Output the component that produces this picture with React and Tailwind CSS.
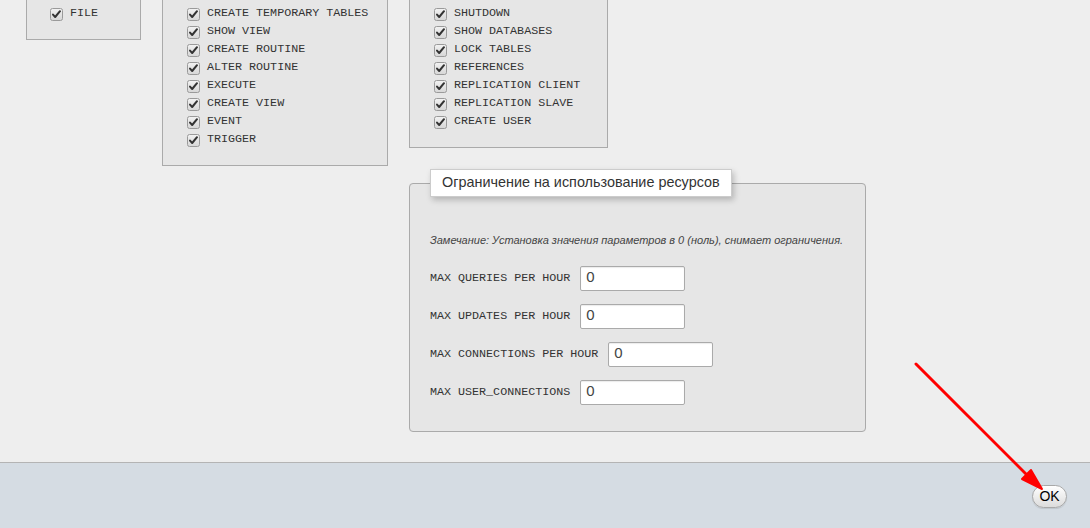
import React from "react";

const mono = { fontFamily: '"Liberation Mono", "Courier New", monospace' };
const sans = { fontFamily: '"Liberation Sans", Arial, sans-serif' };

function Check() {
  return (
    <svg width="13" height="13" viewBox="0 0 13 13" className="shrink-0">
      <defs>
        <linearGradient id="cbg" x1="0" y1="0" x2="0" y2="1">
          <stop offset="0" stopColor="#f2f2f2" />
          <stop offset="1" stopColor="#d6d6d6" />
        </linearGradient>
      </defs>
      <rect x="0.5" y="0.5" width="12" height="12" rx="2" fill="url(#cbg)" stroke="#9a9a9a" />
      <path d="M3 6.6 L5.2 9 L10 3.2" fill="none" stroke="#333" strokeWidth="2" strokeLinecap="round" strokeLinejoin="round" />
    </svg>
  );
}

function Row({ label }) {
  return (
    <div className="flex items-center h-[18px]">
      <Check />
      <span className="ml-[7px] text-[11.7px] text-[#333] whitespace-nowrap leading-none" style={mono}>
        {label}
      </span>
    </div>
  );
}

function Box({ width, items, pl }) {
  return (
    <div
      className={`border border-t-0 border-[#aaa] bg-[#e6e6e6] pt-[5px] pb-[16px] ${pl}`}
      style={{ width }}
    >
      {items.map((i) => (
        <Row key={i} label={i} />
      ))}
    </div>
  );
}

function Field({ label }) {
  return (
    <div className="flex items-center h-[25px]">
      <span className="text-[11.7px] text-[#333] whitespace-nowrap" style={mono}>
        {label}
      </span>
      <div
        className="ml-[10px] w-[105px] h-[25px] bg-white border border-[#aaa] rounded-[2px] flex items-center pl-[5px] pb-[2px] text-[15px] text-[#444] shadow-[inset_0_1px_1px_rgba(0,0,0,0.08)]"
        style={sans}
      >
        0
      </div>
    </div>
  );
}

export default function App() {
  return (
    <div className="w-[1090px] h-[528px] bg-[#eeeeee] relative overflow-hidden">
      <div className="h-[462px] flex items-start pl-[26px] gap-[21px] border-b border-[#b4b4b4] box-content">
        <Box width={115} pl="pl-[23px]" items={["FILE"]} />
        <Box
          width={226}
          pl="pl-[24px]"
          items={[
            "CREATE TEMPORARY TABLES",
            "SHOW VIEW",
            "CREATE ROUTINE",
            "ALTER ROUTINE",
            "EXECUTE",
            "CREATE VIEW",
            "EVENT",
            "TRIGGER",
          ]}
        />
        <div className="flex flex-col">
          <Box
            width={199}
            pl="pl-[24px]"
            items={[
              "SHUTDOWN",
              "SHOW DATABASES",
              "LOCK TABLES",
              "REFERENCES",
              "REPLICATION CLIENT",
              "REPLICATION SLAVE",
              "CREATE USER",
            ]}
          />
          <fieldset className="mt-[21px] w-[457px] h-[263px] border border-[#aaa] rounded-[4px] bg-[#e6e6e6] pl-[20px] pb-[0px]">
            <legend
              className="ml-[0px] h-[28px] px-[11px] bg-white border border-[#ccc] shadow-[2px_3px_6px_rgba(0,0,0,0.22)] text-[14.4px] text-[#333] flex items-center"
              style={sans}
            >
              Ограничение на использование ресурсов
            </legend>
            <p className="mt-[37px] text-[11px] italic text-[#444] leading-[12px]" style={sans}>
              Замечание: Установка значения параметров в 0 (ноль), снимает ограничения.
            </p>
            <div className="mt-[20px] flex flex-col gap-[13px]">
              <Field label="MAX QUERIES PER HOUR" />
              <Field label="MAX UPDATES PER HOUR" />
              <Field label="MAX CONNECTIONS PER HOUR" />
              <Field label="MAX USER_CONNECTIONS" />
            </div>
          </fieldset>
        </div>
      </div>
      <div className="h-[65px] bg-[#d5dce3] flex justify-end items-start pt-[22px] pr-[23px]">
        <button
          className="w-[35px] h-[23px] rounded-full border border-[#a8a8a8] bg-gradient-to-b from-white to-[#dcdcdc] text-[14px] text-black flex items-center justify-center shadow-[0_1px_1px_rgba(0,0,0,0.1)]"
          style={sans}
        >
          OK
        </button>
      </div>
      <svg className="absolute left-0 top-0 pointer-events-none" width="1090" height="528">
        <line x1="916" y1="364" x2="1030" y2="478" stroke="#ff0000" strokeWidth="3" strokeLinecap="round" />
        <polygon points="1042,489 1022,479 1031,470" fill="#ff0000" stroke="#ff0000" strokeWidth="2" strokeLinejoin="round" />
      </svg>
    </div>
  );
}
